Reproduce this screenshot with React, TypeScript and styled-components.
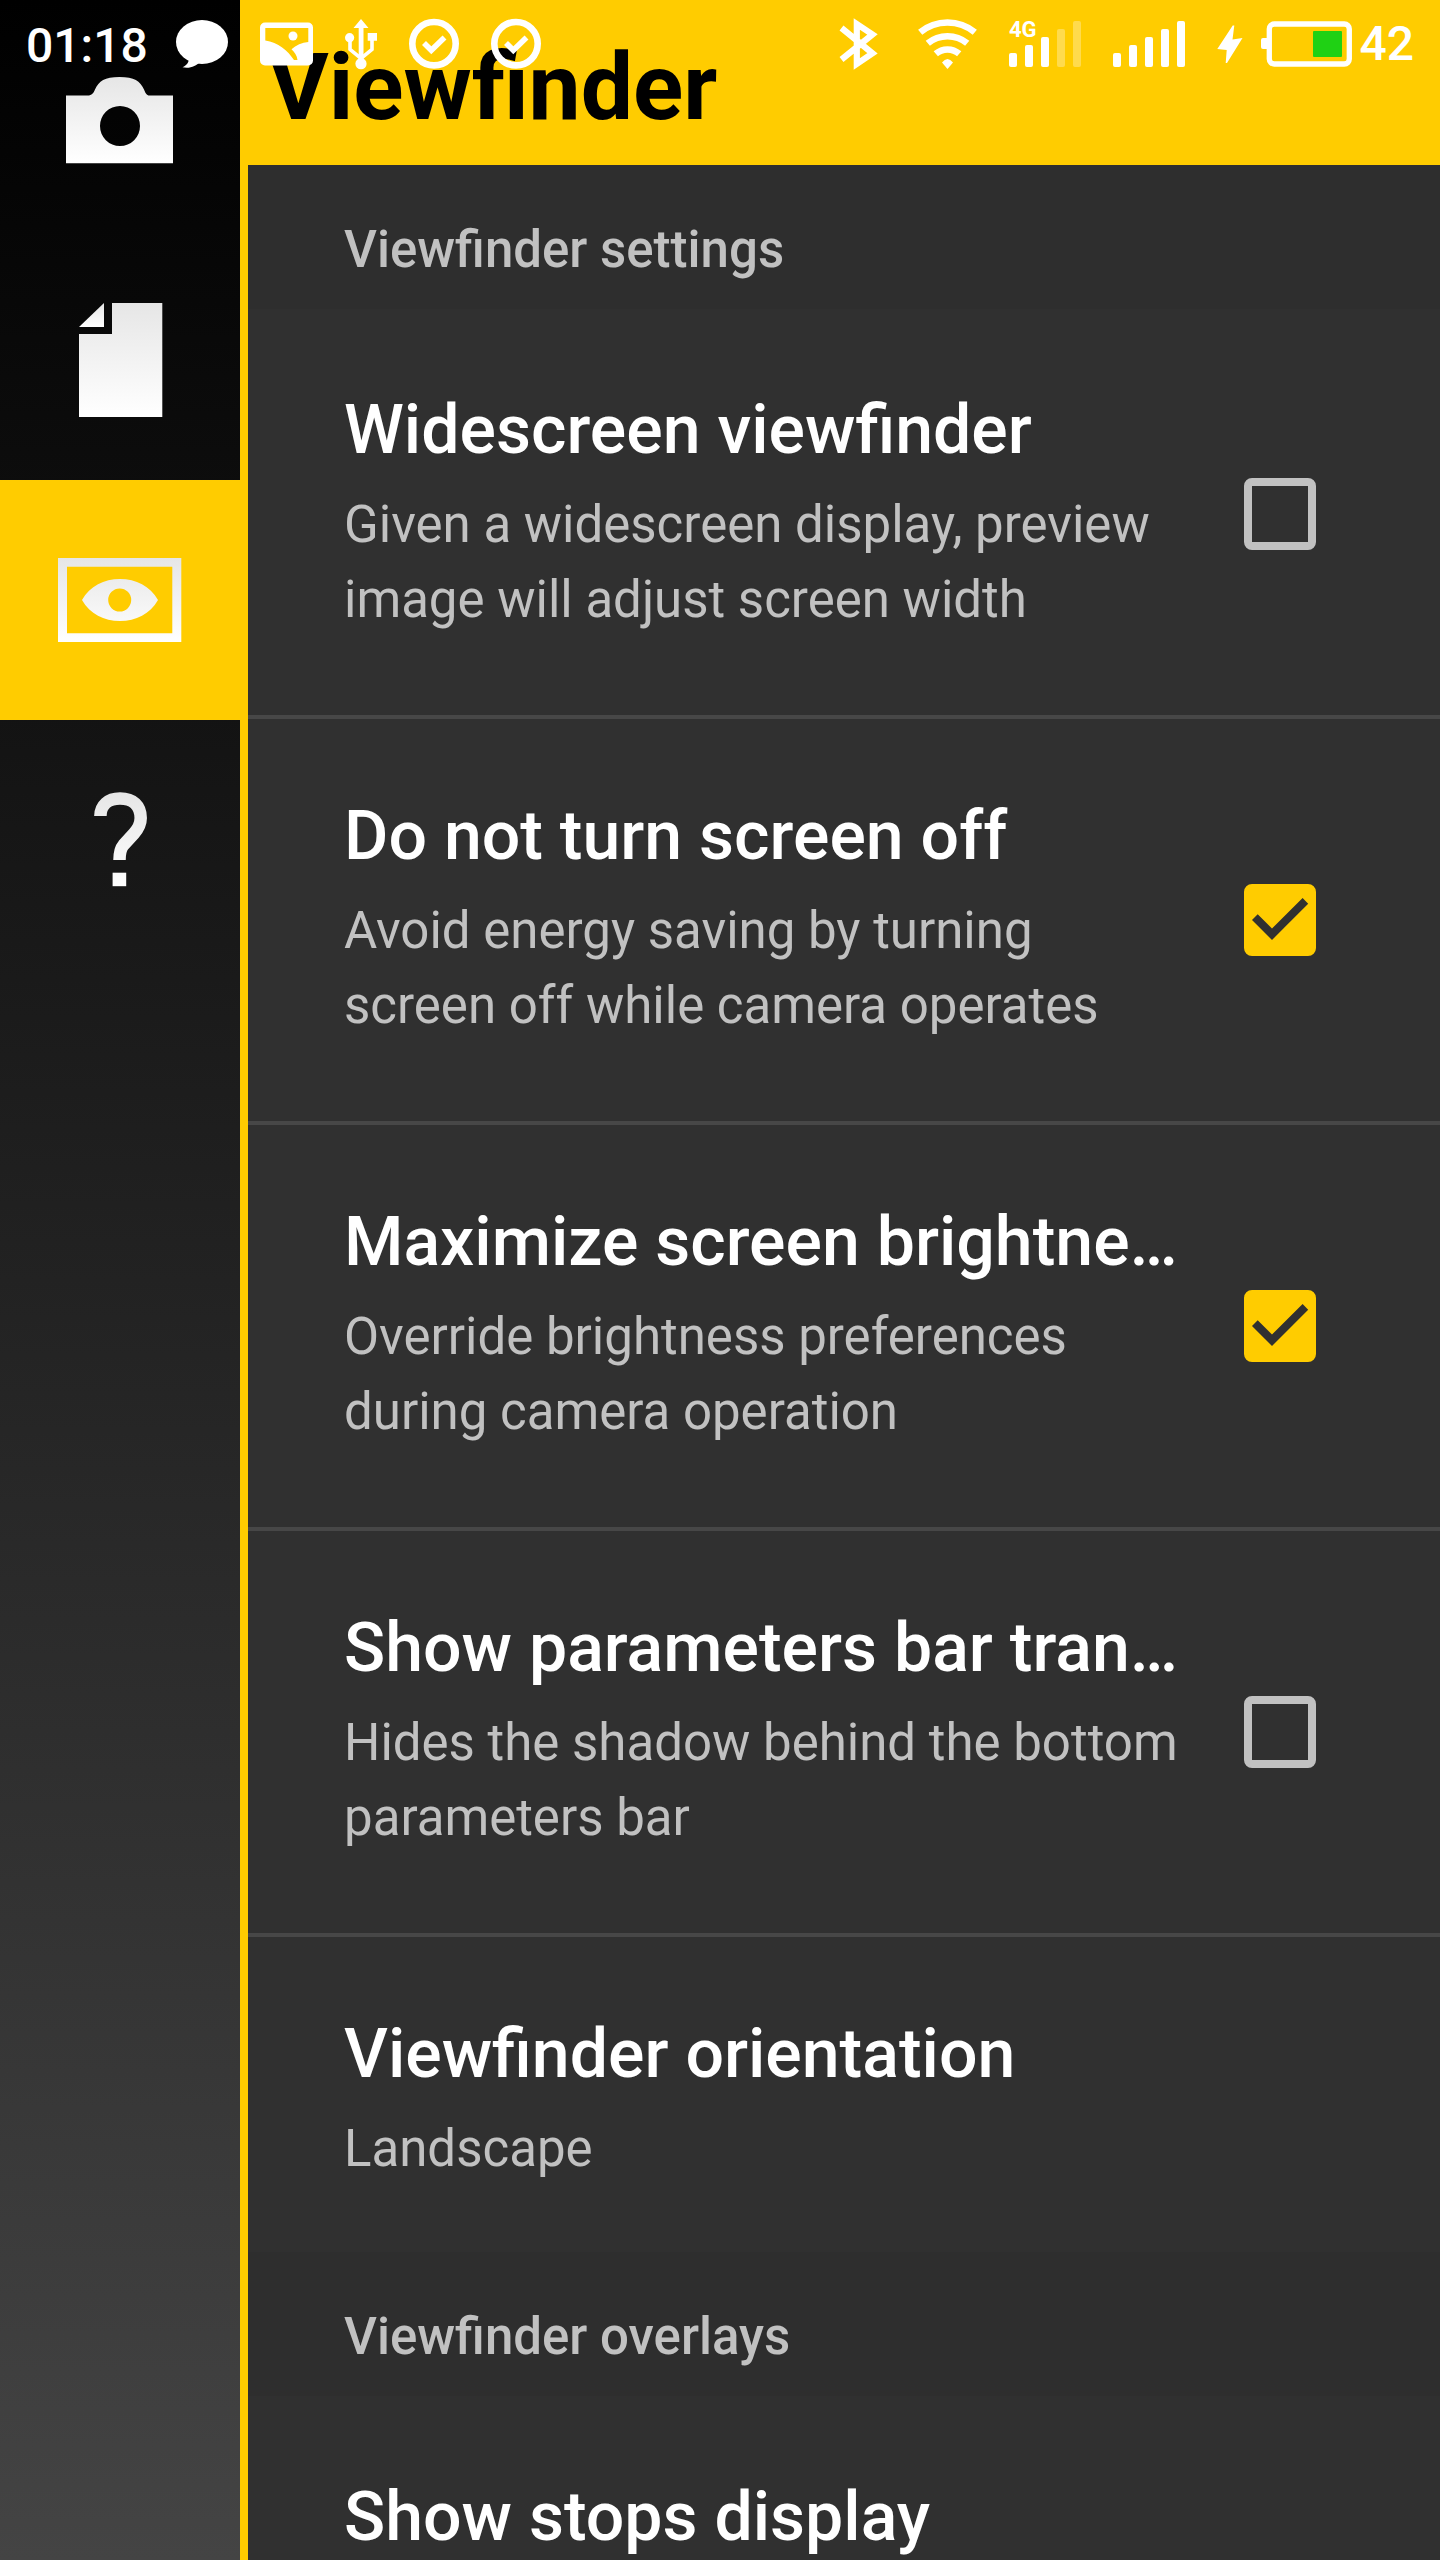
import React, { useState } from "react";
import styled, { createGlobalStyle } from "styled-components";

const YELLOW = "#ffcc00";

const GlobalStyle = createGlobalStyle`
  *, *::before, *::after { box-sizing: border-box; }
  body {
    margin: 0;
    background: #303030;
    font-family: Roboto, "Noto Sans", sans-serif;
  }
`;

const Screen = styled.div`
  position: relative;
  display: grid;
  grid-template-columns: 240px minmax(0, 1fr);
  height: 100vh;
  overflow: hidden;
`;

const StatusBar = styled.div`
  position: absolute;
  inset: 0 0 auto;
  z-index: 1;
  display: flex;
  justify-content: space-between;
  height: 88px;
  padding: 0 26px;
  color: #fff;
  pointer-events: none;
`;

const StatusGroup = styled.div<{ $gap: number }>`
  display: flex;
  align-items: center;
  gap: ${(p) => p.$gap}px;
`;

const StatusText = styled.span`
  font-size: 48px;
  font-weight: 500;
  line-height: 52px;
`;

const Clock = styled(StatusText)`
  padding-top: 4px;
`;

const Glyph = styled.svg`
  display: block;
  flex: none;
  height: 52px;
  fill: currentColor;
`;

const SideNav = styled.nav`
  display: flex;
  flex-direction: column;
  background: linear-gradient(#000, #444);
`;

const NavButton = styled.button<{ $active?: boolean }>`
  width: 100%;
  height: 240px;
  padding: 0;
  border: 0;
  background: ${(p) => (p.$active ? YELLOW : "transparent")};
  cursor: pointer;
`;

const NavIcon = styled.svg`
  display: block;
  width: 240px;
  height: 240px;
`;

const Main = styled.main`
  display: flex;
  flex-direction: column;
  min-height: 0;
  border-left: 8px solid ${YELLOW};
`;

const TitleBar = styled.header`
  display: flex;
  flex: none;
  align-items: center;
  height: 165px;
  padding: 10px 20px 0;
  background: ${YELLOW};
`;

const Title = styled.h1`
  margin: 0;
  color: #000;
  font-size: 93px;
  font-weight: 700;
  line-height: 108px;
`;

const Settings = styled.div`
  flex: 1;
  min-height: 0;
  overflow-y: auto;
  scrollbar-width: none;
  background: #303030;
`;

const Category = styled.h2`
  height: 144px;
  margin: 0;
  padding: 47px 96px 0;
  background: #2e2e2e;
  color: #c1c1c1;
  font-size: 51px;
  font-weight: 500;
  line-height: 75px;
`;

const rowStyles = `
  display: flex;
  width: 100%;
  border: 0;
  border-top: 4px solid #474747;
  padding: 0 96px;
  background: none;
  font: inherit;
  text-align: left;
  cursor: pointer;
`;

const ToggleRow = styled.label`
  ${rowStyles}
  min-height: 406px;

  h2 + & { border-top-color: transparent; }
`;

const ButtonRow = styled.button`
  ${rowStyles}

  h2 + & { border-top-color: transparent; }
`;

const RowText = styled.span`
  display: flex;
  flex: 1;
  flex-direction: column;
  min-width: 0;
  padding: 77px 0 66px;
`;

const RowTitle = styled.span`
  overflow: hidden;
  color: #fff;
  font-size: 68px;
  font-weight: 500;
  line-height: 80px;
  text-overflow: ellipsis;
  white-space: nowrap;
`;

const RowSummary = styled.span`
  padding-top: 17px;
  color: #c1c1c1;
  font-size: 51px;
  line-height: 75px;
`;

const CheckFrame = styled.span`
  display: grid;
  flex: none;
  align-self: center;
  margin: 0 28px 0 60px;
`;

const CheckBox = styled.input`
  grid-area: 1 / 1;
  width: 72px;
  height: 72px;
  margin: 0;
  border: 8px solid #c1c1c1;
  border-radius: 8px;
  appearance: none;
  cursor: pointer;

  &:checked {
    border-color: ${YELLOW};
    background: ${YELLOW};
  }
`;

const CheckMark = styled.svg`
  grid-area: 1 / 1;
  width: 72px;
  height: 72px;
  fill: #303030;
  pointer-events: none;
`;

function SignalBars({ level, label }: { level: number; label?: string }) {
  return (
    <Glyph width="72" viewBox="0 0 72 52" aria-hidden="true">
      {[0, 1, 2, 3, 4].map((i) => (
        <rect
          key={i}
          x={i * 16}
          y={35 - i * 8}
          width="8"
          height={14 + i * 8}
          rx="2"
          opacity={i < level ? 1 : 0.3}
        />
      ))}
      {label && (
        <text x="0" y="19" fontSize="22" fontWeight="700">
          {label}
        </text>
      )}
    </Glyph>
  );
}

function DoneIcon() {
  return (
    <Glyph width="50" viewBox="0 0 50 52" aria-hidden="true">
      <g fill="none" stroke="currentColor">
        <circle cx="25" cy="25.7" r="21.7" strokeWidth="6.6" />
        <path d="M15 25l7.3 7.3L35.5 19.5" strokeWidth="5.6" />
      </g>
    </Glyph>
  );
}

function Status() {
  return (
    <StatusBar>
      <StatusGroup $gap={32}>
        <StatusGroup $gap={28}>
          <Clock>01:18</Clock>
          <Glyph width="52" viewBox="0 0 52 52" aria-hidden="true">
            <ellipse cx="26" cy="24" rx="26" ry="22" />
            <path d="M13 39C13 45 11 47 6.5 49.3C14 51 20 48 24 44Z" />
          </Glyph>
        </StatusGroup>
        <Glyph width="53" viewBox="0 0 53 52" aria-hidden="true">
          <path
            fillRule="evenodd"
            d="M5 4.5H48a5 5 0 0 1 5 5V42.500a5 5 0 0 1-5 5H5a5 5 0 0 1-5-5V9.500a5 5 0 0 1 5-5ZM5.300 10V22.500C18 24 28 33 34 42H37.500C37 37.500 34.500 34 31.500 31.300C36 27 42 24.500 48.300 24V10Z"
          />
          <circle cx="33" cy="18" r="4.5" />
        </Glyph>
        <Glyph width="32" viewBox="0 0 32 52" aria-hidden="true">
          <path d="M16 1L23.500 10H18.500V44H13.700V10H8.500ZM22.700 15H32V22.700H22.700Z" />
          <circle cx="16" cy="45.7" r="5.6" />
          <circle cx="4.6" cy="19.7" r="4.6" />
          <path
            d="M5 20V31.500L16 40.500L27 31.500V20"
            fill="none"
            stroke="currentColor"
            strokeWidth="3.600"
          />
        </Glyph>
        <DoneIcon />
        <DoneIcon />
      </StatusGroup>
      <StatusGroup $gap={32}>
        <Glyph width="47" viewBox="0 0 47 52" aria-hidden="true">
          <path
            d="M2.500 10L33.500 35.300L17.800 46V6L33.500 16.500L2.500 41.500"
            fill="none"
            stroke="currentColor"
            strokeWidth="6.200"
          />
        </Glyph>
        <Glyph width="59" viewBox="0 0 59 52" aria-hidden="true">
          <g fill="none" stroke="currentColor" strokeWidth="6.6">
            <path d="M2.200 14.300A43 43 0 0 1 56.800 14.300" />
            <path d="M9.800 25.300A31 31 0 0 1 49.200 25.300" />
            <path d="M17.800 35.800A18 18 0 0 1 41.200 35.800" />
          </g>
          <path d="M24 44.500Q29.500 37.500 35 44.500L29.500 51Z" />
        </Glyph>
        <SignalBars level={3} label="4G" />
        <SignalBars level={5} />
        <StatusGroup $gap={16}>
          <Glyph width="28" viewBox="0 0 28 52" aria-hidden="true">
            <path d="M15.700 7.500L.3 31L9.700 32L8.700 45H10L25.500 20L15.500 21.500L17.300 7.500Z" />
          </Glyph>
          <StatusGroup $gap={6}>
            <Glyph width="92" viewBox="0 0 92 52" aria-hidden="true">
              <rect x="0" y="20" width="9" height="11" rx="2" />
              <rect
                x="8.3"
                y="6"
                width="80"
                height="40"
                rx="5"
                fill="none"
                stroke="currentColor"
                strokeWidth="5.300"
              />
              <rect x="52" y="13" width="29" height="26" rx="1" fill="#1fd114" />
            </Glyph>
            <StatusText>42</StatusText>
          </StatusGroup>
        </StatusGroup>
      </StatusGroup>
    </StatusBar>
  );
}

function IconShade({ id, from, to }: { id: string; from: number; to: number }) {
  return (
    <linearGradient id={id} gradientUnits="userSpaceOnUse" x1="0" y1={from} x2="0" y2={to}>
      <stop offset="0" stopColor="#e6e6e6" />
      <stop offset="1" stopColor="#ffffff" />
    </linearGradient>
  );
}

const sections = [
  {
    label: "Camera",
    icon: (
      <>
        <IconShade id="shade-camera" from={77} to={163} />
        <path
          fill="url(#shade-camera)"
          fillRule="evenodd"
          d="M66 95.500H87.500C92 95.500 93.500 93 95 89.500C99 81 104.500 77 119.500 77S140 81 144 89.500C145.500 93 146.500 95.500 149.500 95.500H173V163.300H66ZM140 126a20 20 0 1 0-40 0a20 20 0 1 0 40 0Z"
        />
      </>
    ),
  },
  {
    label: "File",
    icon: (
      <>
        <IconShade id="shade-file" from={63} to={177} />
        <IconShade id="shade-fold" from={63} to={87} />
        <path fill="url(#shade-file)" d="M112 63H162.300V177H79V94H112Z" />
        <path fill="url(#shade-fold)" d="M104 63V87H79Z" />
      </>
    ),
  },
  {
    label: "Viewfinder",
    icon: (
      <>
        <IconShade id="shade-eye" from={78} to={162} />
        <path
          fill="url(#shade-eye)"
          fillRule="evenodd"
          d="M58 78H181.300V162H58ZM67 86.700V153.300H172.300V86.700ZM82 120C90 106 104 99 120 99S150 106 158 120C150 134 136 141 120 141S90 134 82 120ZM131.200 120a11.500 11.500 0 1 0-23 0a11.500 11.500 0 1 0 23 0Z"
        />
      </>
    ),
  },
  {
    label: "Help",
    icon: (
      <>
        <IconShade id="shade-help" from={73} to={166} />
        <path
          fill="none"
          stroke="url(#shade-help)"
          strokeWidth="12.500"
          d="M100.400 96C100.400 85.500 108 78.500 120 78.500C133 78.500 140.700 85.500 140.700 98C140.700 104 138 109 134 113.500L123.500 125C120.500 128.500 119.500 132 119.500 140"
        />
        <rect x="112.600" y="152.700" width="13.600" height="13.500" fill="url(#shade-help)" />
      </>
    ),
  },
];

function Toggle({
  title,
  summary,
  initial = false,
}: {
  title: string;
  summary: string;
  initial?: boolean;
}) {
  const [on, setOn] = useState(initial);
  return (
    <ToggleRow>
      <RowText>
        <RowTitle>{title}</RowTitle>
        <RowSummary>{summary}</RowSummary>
      </RowText>
      <CheckFrame>
        <CheckBox type="checkbox" checked={on} onChange={() => setOn(!on)} />
        {on && (
          <CheckMark viewBox="0 0 72 72" aria-hidden="true">
            <path d="M13.700 30.300L28 44.600L58.600 14L64.200 19.700L28 55.900L8 36Z" />
          </CheckMark>
        )}
      </CheckFrame>
    </ToggleRow>
  );
}

export default function App() {
  const [active, setActive] = useState("Viewfinder");
  return (
    <Screen>
      <GlobalStyle />
      <Status />
      <SideNav aria-label="Sections">
        {sections.map(({ label, icon }) => (
          <NavButton
            key={label}
            type="button"
            aria-label={label}
            $active={label === active}
            onClick={() => setActive(label)}
          >
            <NavIcon viewBox="0 0 240 240" aria-hidden="true">
              {icon}
            </NavIcon>
          </NavButton>
        ))}
      </SideNav>
      <Main>
        <TitleBar>
          <Title>Viewfinder</Title>
        </TitleBar>
        <Settings>
          <Category>Viewfinder settings</Category>
          <Toggle
            title="Widescreen viewfinder"
            summary="Given a widescreen display, preview image will adjust screen width"
          />
          <Toggle
            title="Do not turn screen off"
            summary="Avoid energy saving by turning screen off while camera operates"
            initial
          />
          <Toggle
            title="Maximize screen brightne…"
            summary="Override brightness preferences during camera operation"
            initial
          />
          <Toggle
            title="Show parameters bar tran…"
            summary="Hides the shadow behind the bottom parameters bar"
          />
          <ButtonRow type="button">
            <RowText>
              <RowTitle>Viewfinder orientation</RowTitle>
              <RowSummary>Landscape</RowSummary>
            </RowText>
          </ButtonRow>
          <Category>Viewfinder overlays</Category>
          <ButtonRow type="button">
            <RowText>
              <RowTitle>Show stops display</RowTitle>
            </RowText>
          </ButtonRow>
        </Settings>
      </Main>
    </Screen>
  );
}
